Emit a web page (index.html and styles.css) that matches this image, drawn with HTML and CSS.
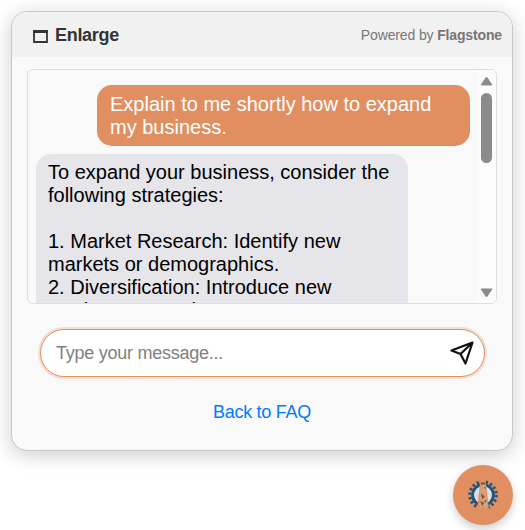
FILE: index.html
```html
<!DOCTYPE html>
<html lang="en">
<head>
<meta charset="utf-8">
<title>Chat</title>
<link rel="stylesheet" href="styles.css">
</head>
<body>
<main class="chat">
  <header class="chat-header">
    <div class="enlarge">
      <svg class="enlarge-icon" width="15" height="13" viewBox="0 0 15 13"><path d="M0 1.5h15" stroke="#373339" stroke-width="3"/><path d="M1 1v11h13V1" fill="none" stroke="#373339" stroke-width="1.8"/></svg>
      <span>Enlarge</span>
    </div>
    <div class="powered">Powered by <b>Flagstone</b></div>
  </header>
  <section class="messages">
    <div class="thread">
      <div class="bubble user">Explain to me shortly how to expand my business.</div>
      <div class="bubble bot">To expand your business, consider the following strategies:<br><br>1. Market Research: Identify new markets or demographics.<br>2. Diversification: Introduce new products or services.</div>
    </div>
    <div class="scrollbar">
      <svg width="13" height="10" viewBox="0 0 13 10"><path d="M6.5 1 L12 9 H1Z" fill="#8b8b8b" stroke="#8b8b8b" stroke-linejoin="round"/></svg>
      <div class="thumb"></div>
      <svg class="down" width="13" height="10" viewBox="0 0 13 10"><path d="M6.5 9 L12 1 H1Z" fill="#8b8b8b" stroke="#8b8b8b" stroke-linejoin="round"/></svg>
    </div>
  </section>
  <div class="composer">
    <input class="field" type="text" placeholder="Type your message...">
    <svg class="send" width="24" height="24" viewBox="0 0 24 24" fill="none" stroke="#111" stroke-width="2.2" stroke-linejoin="round"><path d="M22.5 1.5 L1.5 9.5 L10.5 13 L15.5 22.5 Z M22.5 1.5 L10.5 13"/></svg>
  </div>
  <a class="faq">Back to FAQ</a>
</main>
<div class="launcher">
  <svg width="32" height="32" viewBox="0 0 32 32">
    <circle cx="16" cy="16" r="13.2" fill="none" stroke="#1d5781" stroke-width="3.2" stroke-dasharray="2.3 2.308"/>
    <circle cx="16" cy="16" r="10.4" fill="#dedee0" stroke="#1d5781" stroke-width="2.8"/>
    <path d="M13.4 1h5.2l3.6 31H10Z" fill="#e18f60"/>
    <path d="M13.8 3.5h4.6l.4 7 1.8 20-4.2-3-4.2 3 1.2-18Z" fill="#d6a27b"/>
    <path d="M13.8 3.5h4.6v2h-4.6ZM14 14l4 4-3 2ZM13.2 22l4 2-2 3ZM17 22l2-1v3ZM17 8h1.5v3Z" fill="#855135"/>
  </svg>
</div>
</body>
</html>
```
FILE: styles.css
```css
* { box-sizing: border-box; }
body {
  margin: 0;
  padding: 11px;
  height: 530px;
  overflow: hidden;
  background: #fff;
  font-family: "Liberation Sans", Arial, sans-serif;
}
.chat {
  width: 502px;
  height: 440px;
  border: 1px solid #c8c8c8;
  border-radius: 16px;
  background: #f9f9f9;
  box-shadow: 0 4px 20px rgba(0, 0, 0, 0.2);
  overflow: hidden;
  display: flex;
  flex-direction: column;
}
.chat-header {
  height: 45px;
  flex: none;
  background: #f1f1f1;
  display: flex;
  align-items: center;
  justify-content: space-between;
  padding: 0 10px 0 21px;
}
.enlarge {
  display: flex;
  align-items: center;
  gap: 7px;
  padding-top: 2px;
  font-size: 18px;
  font-weight: bold;
  letter-spacing: -0.3px;
  color: #333;
}
.enlarge-icon { margin-top: 2px; }
.powered { font-size: 14px; letter-spacing: -0.14px; color: #777; }
.messages {
  flex: none;
  height: 235px;
  margin: 12px 15px 0;
  border: 1px solid #ddd;
  border-radius: 6px;
  overflow: hidden;
  display: flex;
}
.thread {
  flex: 1;
  padding: 15px 7px 0 8px;
  display: flex;
  flex-direction: column;
  gap: 8px;
}
.bubble {
  font-size: 20px;
  line-height: 23px;
  padding: 7px 12px 8px;
  border-radius: 15px;
  width: 372px;
  flex: none;
}
.user {
  width: 373px;
  align-self: flex-end;
  color: #fff;
  background: #e18f60;
  padding: 8px 12px 7px 13px;
}
.bot { color: #000; background: #e5e5ea; }
.scrollbar {
  width: 19px;
  background: #fcfcfc;
  display: flex;
  flex-direction: column;
  align-items: center;
  padding: 6px 0 5px;
}
.thumb {
  width: 11px;
  height: 70px;
  margin-top: 7px;
  border-radius: 6px;
  background: #8b8b8b;
}
.down { margin-top: auto; }
.composer {
  flex: none;
  height: 48px;
  margin: 25px 27px 0 28px;
  padding: 0 10px 0 15px;
  border: 1px solid #e18f60;
  border-radius: 24px;
  background: #fff;
  box-shadow: 0 0 0 2px rgba(225, 143, 96, 0.25);
  display: flex;
  align-items: center;
}
.field {
  flex: 1;
  border: 0;
  outline: 0;
  padding: 0;
  background: none;
  font: 18px "Liberation Sans", Arial, sans-serif;
  letter-spacing: -0.26px;
}
.field::placeholder { color: #808080; }
.faq {
  align-self: center;
  margin-top: 25px;
  font-size: 18px;
  line-height: 20px;
  letter-spacing: -0.26px;
  color: #007bff;
}
.launcher {
  position: absolute;
  left: 453px;
  top: 465px;
  width: 60px;
  height: 60px;
  border-radius: 50%;
  background: #e18f60;
  box-shadow: 0 4px 10px rgba(0, 0, 0, 0.2);
  display: flex;
  align-items: center;
  justify-content: center;
}
```
